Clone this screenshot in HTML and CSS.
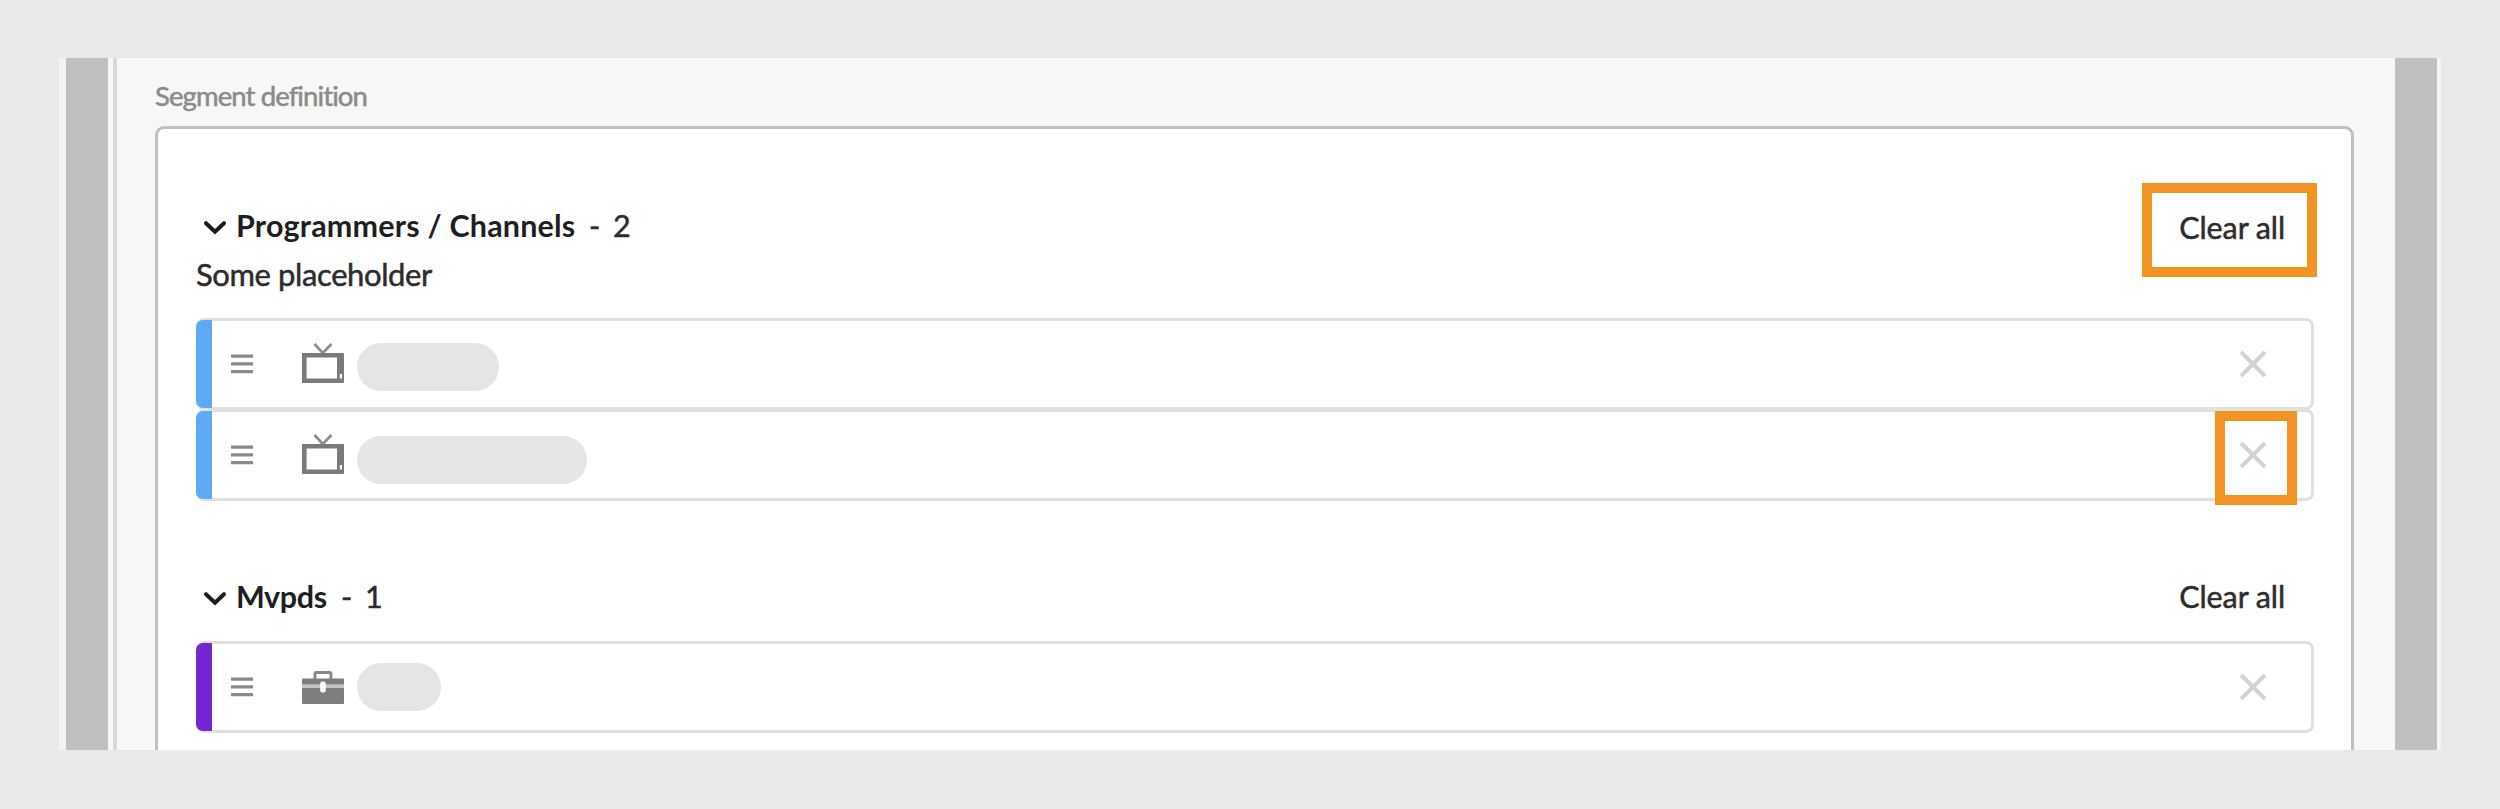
FILE: index.html
```html
<!DOCTYPE html>
<html lang="en">
<head>
<meta charset="utf-8">
<title>Segment definition</title>
<link rel="stylesheet" href="styles.css">
</head>
<body>
<svg width="0" height="0" class="defs" aria-hidden="true">
  <symbol id="chevron" viewBox="0 0 24 16"><path d="M3 3.2 12 11.8 21 3.2" fill="none" stroke="#1c1c1c" stroke-width="4" stroke-linecap="round"/></symbol>
  <symbol id="grip" viewBox="0 0 22 20"><path d="M0 2.2H22M0 9.9H22M0 17.6H22" stroke="#8a8a8a" stroke-width="3.3"/></symbol>
  <symbol id="tv" viewBox="0 0 42 40"><path d="M12.5 1 20.8 10 29.5 1" fill="none" stroke="#8f8f8f" stroke-width="2.8"/><path fill="#7a7a7a" fill-rule="evenodd" d="M1 10H41Q42 10 42 11V39Q42 40 41 40H1Q0 40 0 39V11Q0 10 1 10ZM4.6 14.6V35.6H35V14.6ZM37.8 31V35.6H40V31Z"/></symbol>
  <symbol id="case" viewBox="0 0 42 33"><path d="M13 8V2.8Q13 1.5 14.3 1.5H27.7Q29 1.5 29 2.8V8" fill="none" stroke="#858585" stroke-width="2.8"/><path d="M1 7.5H41Q42 7.5 42 8.5V32Q42 33 41 33H1Q0 33 0 32V8.5Q0 7.5 1 7.5Z" fill="#7e7e7e"/><path d="M0 13.3H42V17H0Z" fill="#c4c4c4"/><rect x="18.2" y="10.5" width="5.6" height="11" rx="2.2" fill="#fff"/></symbol>
  <symbol id="cross" viewBox="0 0 28 28"><path d="M2 2 26 26M26 2 2 26" stroke="#d2d2d2" stroke-width="4"/></symbol>
</svg>
<main class="window">
  <div class="rail rail-left"></div>
  <section class="page">
    <h1 class="label">Segment definition</h1>
    <div class="definition">
      <section class="group">
        <header class="group-head">
          <svg class="chevron"><use href="#chevron"/></svg>
          <h2 class="title title-programmers">Programmers / Channels</h2>
          <span class="dash">-</span><span class="count">2</span>
          <button class="clear clear-first"><span>Clear all</span><i class="highlight highlight-clear"></i></button>
        </header>
        <p class="hint">Some placeholder</p>
        <ul class="rows">
          <li class="row blue">
            <svg class="grip"><use href="#grip"/></svg><svg class="tv"><use href="#tv"/></svg><span class="pill pill-one"></span>
            <button class="remove" aria-label="Remove"><svg class="cross"><use href="#cross"/></svg></button>
          </li>
          <li class="row blue">
            <svg class="grip"><use href="#grip"/></svg><svg class="tv"><use href="#tv"/></svg><span class="pill pill-two"></span>
            <button class="remove" aria-label="Remove"><svg class="cross"><use href="#cross"/></svg><i class="highlight highlight-remove"></i></button>
          </li>
        </ul>
      </section>
      <section class="group">
        <header class="group-head">
          <svg class="chevron"><use href="#chevron"/></svg>
          <h2 class="title title-mvpds">Mvpds</h2>
          <span class="dash">-</span><span class="count">1</span>
          <button class="clear"><span>Clear all</span></button>
        </header>
        <ul class="rows">
          <li class="row purple">
            <svg class="grip"><use href="#grip"/></svg><svg class="case"><use href="#case"/></svg><span class="pill pill-three"></span>
            <button class="remove" aria-label="Remove"><svg class="cross"><use href="#cross"/></svg></button>
          </li>
        </ul>
      </section>
    </div>
  </section>
  <div class="rail rail-right"></div>
</main>
</body>
</html>
```
FILE: styles.css
```css
* { box-sizing: border-box; }
body { margin: 0; height: 809px; padding: 58px 59px 59px; background: #e9e9e9; font-family: Lato, "Open Sans", sans-serif; color: #2c2c2c; -webkit-text-stroke: 0.5px currentColor; overflow: hidden; }
h1, h2, p, ul { margin: 0; padding: 0; list-style: none; }
button { padding: 0; border: 0; background: none; font: inherit; color: inherit; }
svg { display: block; flex: none; }
.defs { position: absolute; }
.window { display: flex; width: 2382px; height: 692px; overflow: hidden; background: #f7f7f7; }
.rail { flex: none; background: #c0c0c0; }
.rail-left { width: 49px; border-left: 7px solid #f3f3f3; }
.rail-right { width: 46px; border-right: 4px solid #f4f4f4; }
.page { flex: 1; margin-left: 5px; border-left: 4px solid #d8d8d8; padding: 24px 41px 0 38px; }
.label { height: 44px; font-size: 27.5px; line-height: 28px; font-weight: 400; color: #8a8a8a; letter-spacing: -0.9px; white-space: nowrap; }
.definition { height: 700px; border: 3px solid #c0c0c0; border-radius: 9px; background: #fff; padding: 72px 37px 0 38px; }
.group + .group { margin-top: 71px; }
.group-head { display: flex; align-items: center; height: 48px; font-size: 30.5px; line-height: 48px; white-space: nowrap; }
.chevron { width: 24px; height: 16px; margin: 6px 9px 0 7px; }
.title { font-size: 30.5px; line-height: 48px; font-weight: 700; color: #1f1f1f; -webkit-text-stroke: 0; }
.title-programmers { width: 353px; letter-spacing: 0.18px; }
.title-mvpds { width: 105px; letter-spacing: -0.4px; }
.dash { width: 24px; }
.clear { position: relative; margin-left: auto; margin-right: 29px; letter-spacing: -0.1px; line-height: 48px; }
.clear-first { top: 3px; }
.clear-first span { position: relative; top: -1px; }
.hint { height: 69px; padding-top: 1px; font-size: 31px; line-height: 48px; letter-spacing: -0.4px; }
.row { position: relative; display: flex; align-items: center; height: 92px; padding-left: 32px; border: 3px solid #e0e0e0; border-radius: 8px; }
.row + .row { margin-top: -1px; }
.row::before { content: ""; position: absolute; left: -3px; top: -1px; width: 15.5px; height: 88px; border-radius: 7px 0 0 7px; background: #5eaaf7; }
.purple::before { background: #7326d3; }
.group + .group .rows { margin-top: 21px; }
.grip { width: 22px; height: 20px; }
.tv { width: 42px; height: 40px; margin: -3px 13px 0 49px; }
.case { width: 42px; height: 33px; margin: 0 13px 0 49px; }
.pill { height: 48px; border-radius: 24px; background: #e5e5e5; }
.pill-one { width: 142px; margin-top: 6px; }
.pill-two { width: 230px; margin-top: 10px; }
.pill-three { width: 84px; }
.remove { position: relative; margin-left: auto; margin-right: 44px; }
.cross { width: 28px; height: 28px; }
.highlight { position: absolute; border: 10px solid #f29423; }
.highlight-clear { right: -32px; top: -21px; width: 175px; height: 94px; }
.highlight-remove { left: -24px; top: -30px; width: 82px; height: 94px; }
```
